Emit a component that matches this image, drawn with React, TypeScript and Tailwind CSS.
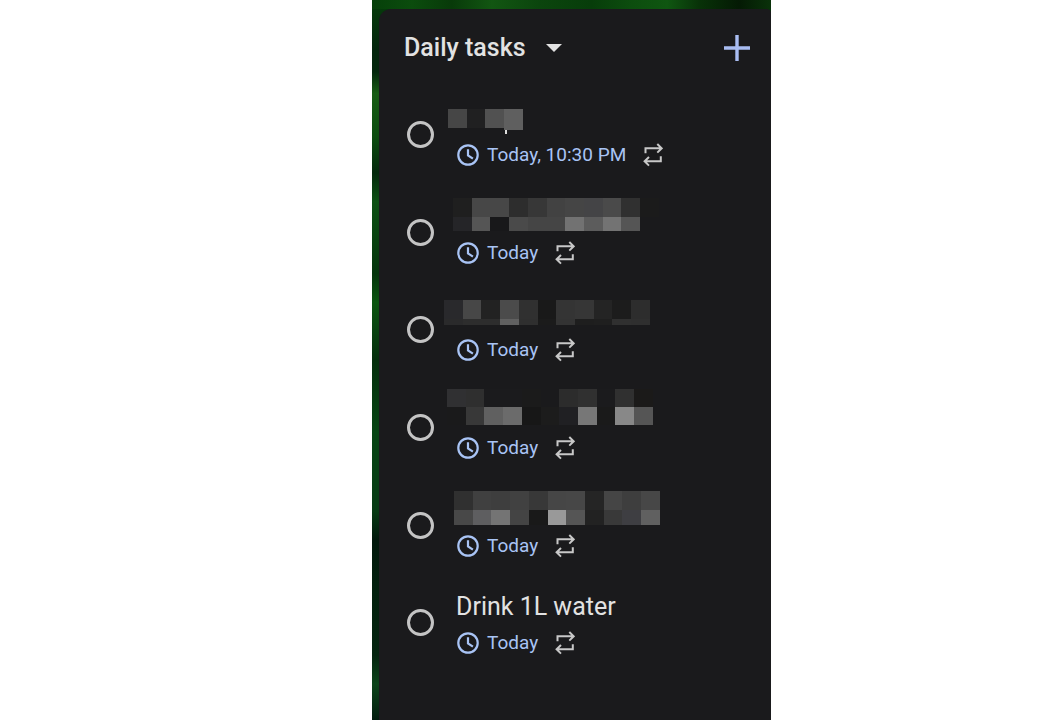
type Band = { y: number; height: number; colors: string[] };
type Task = {
  id: string;
  title?: string;
  mask?: { x: number; bands: Band[] };
  due: string;
};

const CELL = 18.7;

const tasks: Task[] = [
  {
    id: "task-1",
    mask: {
      x: 4,
      bands: [
        { y: 14, height: 19, colors: ["#464646", "#202021", "#515151", "#5f5f5f"] },
        { y: 33, height: 2, colors: ["none", "none", "none", "#5f5f5f"] },
      ],
    },
    due: "Today, 10:30 PM",
  },
  {
    id: "task-2",
    mask: {
      x: 9,
      bands: [
        { y: 5, height: 19, colors: ["#1f1f1f", "#474747", "#474747", "#2d2d2d", "#373737", "#424242", "#454545", "#444446", "#4a4a4a", "#303030", "#1b1b1b"] },
        { y: 24, height: 14, colors: ["#252528", "#555555", "#18181a", "#4a4a4a", "#454545", "#454545", "#727272", "#5c5c5c", "#737373", "#555555"] },
      ],
    },
    due: "Today",
  },
  {
    id: "task-3",
    mask: {
      x: 0,
      bands: [
        { y: 10, height: 19, colors: ["#29292c", "#474747", "#222222", "#4b4b4b", "#303030", "#191919", "#343434", "#363636", "#242424", "#1c1c1c", "#2d2d2d"] },
        { y: 29, height: 6, colors: ["#2a2a2b", "#2d2d2d", "#2d2d2d", "#606060", "#2f2f2f", "#1b1b1b", "#333333", "#1e1e1e", "#1f1f1f", "#303030", "#2f2f2f"] },
      ],
    },
    due: "Today",
  },
  {
    id: "task-4",
    mask: {
      x: 3,
      bands: [
        { y: 1, height: 18, colors: ["#303032", "#2f2f2f", "#1b1b1d", "#1b1b1d", "#1b1b1b", "#1a1a1c", "#2c2c2c", "#303030", "#1b1b1d", "#303030", "#1b1a19"] },
        { y: 19, height: 18, colors: ["#1a1a1b", "#383838", "#606060", "#6b6b6b", "#171717", "#1c1c1c", "#202023", "#777777", "#1a1a1a", "#888888", "#555555"] },
      ],
    },
    due: "Today",
  },
  {
    id: "task-5",
    mask: {
      x: 10,
      bands: [
        { y: 5, height: 19, colors: ["#303030", "#404040", "#3e3e3e", "#414141", "#383838", "#464646", "#474747", "#252525", "#454545", "#3e3e3e", "#474747"] },
        { y: 24, height: 15, colors: ["#484848", "#5e5e60", "#747474", "#444444", "#191919", "#999999", "#555555", "#222222", "#393939", "#3e3e42", "#606060"] },
      ],
    },
    due: "Today",
  },
  { id: "task-6", title: "Drink 1L water", due: "Today" },
];

const ClockIcon = () => (
  <svg className="h-[22px] w-[22px]" viewBox="0 0 22 22" fill="none" stroke="currentColor" strokeWidth="2.2" aria-hidden="true">
    <circle cx="11" cy="11" r="9.7" />
    <path d="M11 5.3v6l4.9 3.3" />
  </svg>
);

const RepeatIcon = () => (
  <svg className="h-6 w-5" viewBox="0 0 20 24" fill="none" stroke="currentColor" strokeWidth="2" aria-hidden="true">
    <path d="M2.5 10.3v-5h16M14.3 1l4.4 4.3-4.4 4.3" />
    <path d="M17.8 13.3v5h-16M6 14l-4.4 4.3L6 22.6" />
  </svg>
);

const MaskedTitle = ({ id, mask }: { id: string; mask: NonNullable<Task["mask"]> }) => (
  <svg className="-ml-3 h-12 w-[236px]" viewBox="0 0 236 48" shapeRendering="crispEdges" aria-hidden="true">
    {mask.bands.map((band) =>
      band.colors.map((color, i) => (
        <rect
          key={`${id}-${band.y}-${i}`}
          x={mask.x + i * CELL}
          y={band.y}
          width={CELL}
          height={band.height}
          fill={color}
        />
      ))
    )}
    {id === "task-1" && <rect x="61" y="35" width="2" height="4" fill="#dddddd" />}
  </svg>
);

const TaskRow = ({ task }: { task: Task }) => (
  <li className="flex items-start gap-[22px]">
    <input
      type="checkbox"
      id={task.id}
      aria-label={task.title ? undefined : "Hidden task"}
      className="mt-[26px] h-[27px] w-[27px] shrink-0 appearance-none rounded-full border-[3px] border-[#c4c4c4] checked:bg-[#c4c4c4]"
    />
    <div className="min-w-0">
      <label htmlFor={task.id} className="flex h-12 items-center text-[25px] leading-8 text-[#e2e2e2]">
        {task.mask ? <MaskedTitle id={task.id} mask={task.mask} /> : task.title}
      </label>
      <div className="flex h-6 items-center whitespace-nowrap pl-px text-[19px] leading-6 text-[#a9c4f5]">
        <ClockIcon />
        <span className="ml-2">{task.due}</span>
        <span className="ml-[17px] text-[#c8c8c8]">
          <RepeatIcon />
        </span>
      </div>
    </div>
  </li>
);

const App = () => {
  return (
    <div className="grid min-h-screen grid-cols-[372fr_399px_286fr] bg-white font-['Roboto',sans-serif]">
      <main className="col-start-2 flex flex-col bg-[linear-gradient(to_bottom,#063d0b_0%,#03250c_7%,#03260c_10%,#175c14_13%,#0b4c0f_19%,#04280c_24%,#0c5013_28%,#04340c_38%,#0a550f_42%,#094610_45%,#042e0c_50%,#064513_60%,#063a13_71%,#01180c_75%,#02200d_82%,#04240f_91%,#0b4419_95%,#021d0e_100%)]">
        <div className="h-[9px] bg-[linear-gradient(to_right,#06400a_0%,#0b4c0d_10%,#083a09_20%,#125612_30%,#0b450d_42%,#073d0a_55%,#0c4d0e_65%,#0f5611_74%,#083208_82%,#041a04_92%,#0a320a_100%)]" />
        <section className="ml-[7px] grow rounded-tl-xl rounded-tr bg-[#1a1a1c]">
          <header className="flex h-[78px] items-center justify-between pl-[25px] pr-4">
            <div className="relative">
              <select
                aria-label="Task list"
                className="appearance-none bg-transparent pr-9 text-[25px] font-medium leading-8 text-[#e2e2e2]"
              >
                <option>Daily tasks</option>
              </select>
              <svg className="pointer-events-none absolute right-0 top-3 h-2 w-4" viewBox="0 0 16 8" fill="#e2e2e2" aria-hidden="true">
                <path d="M0 0h16L8 8z" />
              </svg>
            </div>
            <button type="button" aria-label="Add task" className="flex h-9 w-9 items-center justify-center text-[#a9bdf2]">
              <svg className="h-[26px] w-[26px]" viewBox="0 0 26 26" fill="none" stroke="currentColor" strokeWidth="3.4" aria-hidden="true">
                <path d="M13 0v26M0 13h26" />
              </svg>
            </button>
          </header>
          <ul className="mt-2 grid min-h-[586px] auto-rows-fr pl-7">
            {tasks.map((task) => (
              <TaskRow key={task.id} task={task} />
            ))}
          </ul>
        </section>
      </main>
    </div>
  );
};

export default App;
